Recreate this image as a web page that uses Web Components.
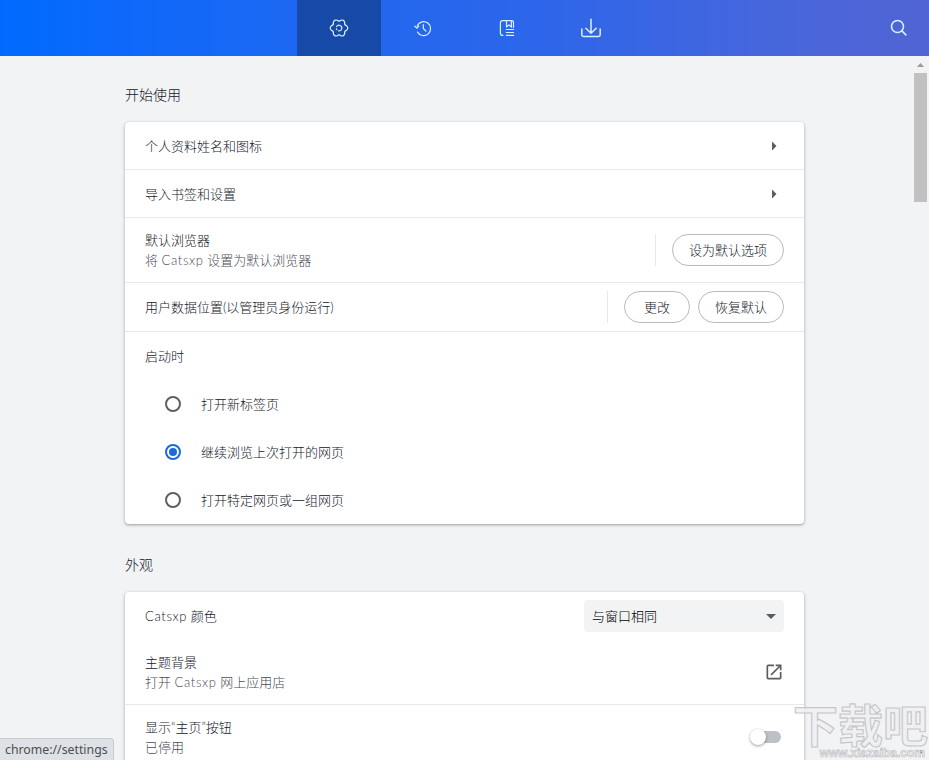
<!DOCTYPE html>
<html lang="zh-CN">
<head>
<meta charset="utf-8">
<title>设置</title>
<style>
  html, body {
    margin: 0;
    height: 100%;
    overflow: hidden;
  }
  body {
    background: #f1f3f5;
    color: #141728;
    font-family: Lato, "Noto Sans CJK SC", sans-serif;
    font-size: 13px;
    font-weight: 300;
    line-height: 20px;
  }
</style>
</head>
<body>
<settings-page></settings-page>

<script>
const define = (name, html) => {
  customElements.define(name, class extends HTMLElement {
    connectedCallback() {
      if (this.shadowRoot) return;
      this.attachShadow({ mode: 'open' }).innerHTML = html;
    }
  });
};

define('nav-tab', `
  <style>
    :host { display: flex; width: 84px; height: 56px; align-items: center; justify-content: center; }
    :host([active]) { background: #1649a8; }
  </style>
  <slot></slot>
`);

define('nav-bar', `
  <style>
    :host {
      display: grid;
      grid-template-columns: 297px 336px 1fr;
      height: 56px;
      background: linear-gradient(90deg, #006aff 0%, #0d69fb 12%, #2467ee 42%, #2b66eb 56%, #4b66da 88%, #5064d4 100%);
    }
    .tabs { display: flex; grid-column: 2; }
    .search { display: flex; align-items: center; justify-content: flex-end; padding-right: 18px; }
    svg { width: 24px; height: 24px; fill: none; stroke: #d9f1ff; stroke-width: 1.2; stroke-linecap: round; stroke-linejoin: round; }
  </style>
  <div class="tabs">
    <nav-tab active>
      <svg viewBox="0 0 24 24"><path d="M19.5 9.7A2.7 2.7 0 0 1 19.5 14.3A2.6 2.6 0 0 0 17.7 17.4A2.7 2.7 0 0 1 13.8 19.7A2.6 2.6 0 0 0 10.2 19.7A2.7 2.7 0 0 1 6.3 17.4A2.6 2.6 0 0 0 4.5 14.3A2.7 2.7 0 0 1 4.5 9.7A2.6 2.6 0 0 0 6.3 6.6A2.7 2.7 0 0 1 10.2 4.3A2.6 2.6 0 0 0 13.8 4.3A2.7 2.7 0 0 1 17.7 6.6A2.6 2.6 0 0 0 19.5 9.7Z"/><path d="M9.6 10.6a2.8 2.8 0 1 1 2 4.2M9.3 12.8l.5 1"/></svg>
    </nav-tab>
    <nav-tab>
      <svg viewBox="0 0 24 24"><path d="M6.3 9.5a7 7 0 1 1 .2 6.6M3.8 10.2l2.1 1.8 1.8-2M7.8 17.6l.6.5M12.3 8.5v4l2.7 2.6"/></svg>
    </nav-tab>
    <nav-tab>
      <svg viewBox="0 0 24 24"><path d="M8 19.3H7.4a2 2 0 0 1-2-2V6.7a2 2 0 0 1 2-2H16.5a2 2 0 0 1 2 2v4.7M11.5 4.8v6.2l2.4-2.1 2.5 2.1V4.8M11.3 13.5h7.3M11.3 16.5h7.3M11.3 19.4h7.3"/></svg>
    </nav-tab>
    <nav-tab>
      <svg viewBox="0 0 24 24" style="stroke-width:1.5"><path d="M12 3.3v13.8M6.8 12.2l5.2 5 5.200-5M2.800 13v5.700q0 1.700 1.700 1.700h15q1.700 0 1.700-1.700V13"/></svg>
    </nav-tab>
  </div>
  <div class="search">
    <svg viewBox="0 0 24 24" style="stroke-width:1.6"><circle cx="10.5" cy="10.5" r="6"/><path d="M14.9 14.9l4 4"/></svg>
  </div>
`);

define('settings-section', `
  <style>
    :host { display: block; width: 679px; }
    h2 { margin: 0; font-size: 14px; font-weight: inherit; line-height: 20px; height: 37px; }
    .card {
      background: #fff;
      border-radius: 4px;
      box-shadow: 0 1px 2px rgba(60,64,67,.3), 0 1px 3px 1px rgba(60,64,67,.15);
    }
  </style>
  <h2><slot name="title"></slot></h2>
  <div class="card"><slot></slot></div>
`);

define('settings-row', `
  <style>
    :host {
      display: flex;
      box-sizing: border-box;
      height: 48px;
      padding: 0 20px;
      align-items: center;
      border-top: 1px solid #e8e9ec;
    }
    :host([first]) { border-top: 0; }
    .label { flex: 1; }
    .sub { color: #4b4d57; }
    .end { display: flex; align-items: center; gap: 8px; }
  </style>
  <div class="label">
    <div><slot name="label"></slot></div>
    <div class="sub"><slot name="sub"></slot></div>
  </div>
  <div class="end"><slot></slot></div>
`);

define('row-arrow', `
  <style>
    :host { display: flex; width: 12px; }
    svg { width: 5px; height: 10px; fill: #5a5c61; }
  </style>
  <svg viewBox="0 0 5 10"><path d="M0 .5L4.500 5 0 9.500z"/></svg>
`);

define('row-separator', `
  <style>
    :host { display: block; width: 1px; height: 32px; margin-right: 8px; background: #e8e9ec; }
  </style>
`);

define('pill-button', `
  <style>
    :host {
      display: flex;
      box-sizing: border-box;
      min-width: 66px;
      height: 32px;
      padding: 0 16px 1px;
      align-items: center;
      justify-content: center;
      border: 1px solid #b9babe;
      border-radius: 16px;
    }
  </style>
  <slot></slot>
`);

define('radio-option', `
  <style>
    :host { display: flex; height: 48px; padding-left: 40px; align-items: center; gap: 20px; }
    .disc {
      box-sizing: border-box;
      display: grid;
      place-items: center;
      width: 16px;
      height: 16px;
      border: 2px solid #5f6065;
      border-radius: 50%;
    }
    :host([checked]) .disc { border-color: #1a6ad8; }
    :host([checked]) .disc::after { content: ""; width: 8px; height: 8px; border-radius: 50%; background: #1a6ad8; }
  </style>
  <div class="disc"></div>
  <slot></slot>
`);

define('drop-down', `
  <style>
    :host {
      display: flex;
      box-sizing: border-box;
      width: 200px;
      height: 32px;
      padding: 0 8px;
      align-items: center;
      justify-content: space-between;
      border-radius: 4px;
      background: #f1f3f4;
      color: #000;
    }
    svg { width: 10px; height: 5px; fill: #5a5c61; }
  </style>
  <slot></slot>
  <svg viewBox="0 0 10 5"><path d="M0 0h10l-5 5z"/></svg>
`);

define('open-icon', `
  <style>
    :host { display: flex; }
    svg { width: 20px; height: 20px; fill: #5a5c61; }
  </style>
  <svg viewBox="0 0 24 24"><path d="M19 19H5V5h7V3H5a2 2 0 0 0-2 2v14a2 2 0 0 0 2 2h14a2 2 0 0 0 2-2v-7h-2v7zM14 3v2h3.6l-9.8 9.8 1.4 1.4L19 6.4V10h2V3z"/></svg>
`);

define('toggle-switch', `
  <style>
    :host { display: flex; width: 28px; height: 12px; margin-right: 3px; border-radius: 6px; background: #bdc1c6; align-items: center; }
    .knob { flex: none; width: 16px; height: 16px; margin-left: -3px; border-radius: 50%; background: #fff; box-shadow: 0 1px 3px rgba(0,0,0,.4); }
  </style>
  <div class="knob"></div>
`);

define('scroll-bar', `
  <style>
    :host { display: flex; width: 15px; flex-direction: column; align-items: center; background: #f2f3f4; }
    .thumb { width: 13px; height: 129px; align-self: flex-start; background: #c1c1c1; }
    .up, .down { display: flex; height: 17px; align-items: center; }
    .down { margin-top: auto; }
    svg { width: 7px; height: 4px; fill: #9b9b9b; margin-right: 2px; }
    .down svg { fill: #404040; }
  </style>
  <div class="up"><svg viewBox="0 0 7 4"><path d="M0 4h7L3.5 0z"/></svg></div>
  <div class="thumb"></div>
  <div class="down"><svg viewBox="0 0 7 4"><path d="M0 0h7L3.5 4z"/></svg></div>
`);

define('status-bubble', `
  <style>
    :host {
      position: absolute;
      left: 0;
      bottom: 0;
      box-sizing: border-box;
      width: 114px;
      height: 22px;
      padding-left: 5px;
      border: solid #c9ccd0;
      border-width: 1px 1px 0 0;
      border-radius: 0 4px 0 0;
      background: #dee1e6;
      color: #4b4e52;
      font: 400 12.3px/21px "Noto Sans", sans-serif;
      white-space: nowrap;
    }
  </style>
  <slot></slot>
`);

define('site-mark', `
  <style>
    :host { position: absolute; right: 1px; bottom: 0; width: 135px; height: 60px; pointer-events: none; white-space: nowrap; }
    .name {
      font: 700 45px/47px "Noto Sans CJK SC", sans-serif;
      color: rgba(240,240,242,.8);
      -webkit-text-stroke: 1.2px rgba(190,191,195,.85);
    }
    .url {
      padding-right: 3px;
      text-align: right;
      font: 700 12px/13px "Liberation Sans", sans-serif;
      color: #f3f3f4;
      -webkit-text-stroke: .6px #b9babd;
    }
  </style>
  <div class="name">下载吧</div>
  <div class="url">www.xiazaiba.com</div>
`);

define('settings-page', `
  <style>
    :host { display: flex; position: relative; flex-direction: column; height: 760px; overflow: hidden; }
    .body { display: flex; flex: 1; min-height: 0; }
    main { flex: 1; display: flex; flex-direction: column; gap: 31px; padding: 29px 0 0 125px; overflow: hidden; }
    settings-section { flex: none; }
    .brand { letter-spacing: .65px; }
    .tall { height: 65px; }
    .mid { height: 49px; }
  </style>
  <nav-bar></nav-bar>
  <div class="body">
    <main>
      <settings-section>
        <span slot="title">开始使用</span>
        <settings-row first style="height:47px"><span slot="label">个人资料姓名和图标</span><row-arrow></row-arrow></settings-row>
        <settings-row><span slot="label">导入书签和设置</span><row-arrow></row-arrow></settings-row>
        <settings-row class="tall">
          <span slot="label">默认浏览器</span>
          <span slot="sub">将 <span class="brand">Catsxp</span> 设置为默认浏览器</span>
          <row-separator></row-separator>
          <pill-button>设为默认选项</pill-button>
        </settings-row>
        <settings-row class="mid">
          <span slot="label">用户数据位置(以管理员身份运行)</span>
          <row-separator></row-separator>
          <pill-button>更改</pill-button>
          <pill-button>恢复默认</pill-button>
        </settings-row>
        <settings-row class="mid"><span slot="label">启动时</span></settings-row>
        <radio-option>打开新标签页</radio-option>
        <radio-option checked>继续浏览上次打开的网页</radio-option>
        <radio-option>打开特定网页或一组网页</radio-option>
      </settings-section>
      <settings-section>
        <span slot="title">外观</span>
        <settings-row first><span slot="label"><span class="brand">Catsxp</span> 颜色</span><drop-down>与窗口相同</drop-down></settings-row>
        <settings-row first style="height:64px">
          <span slot="label">主题背景</span>
          <span slot="sub">打开 <span class="brand">Catsxp</span> 网上应用店</span>
          <open-icon></open-icon>
        </settings-row>
        <settings-row class="tall">
          <span slot="label">显示“主页”按钮</span>
          <span slot="sub">已停用</span>
          <toggle-switch></toggle-switch>
        </settings-row>
      </settings-section>
    </main>
    <scroll-bar></scroll-bar>
  </div>
  <status-bubble>chrome://settings</status-bubble>
  <site-mark></site-mark>
`);
</script>
</body>
</html>
